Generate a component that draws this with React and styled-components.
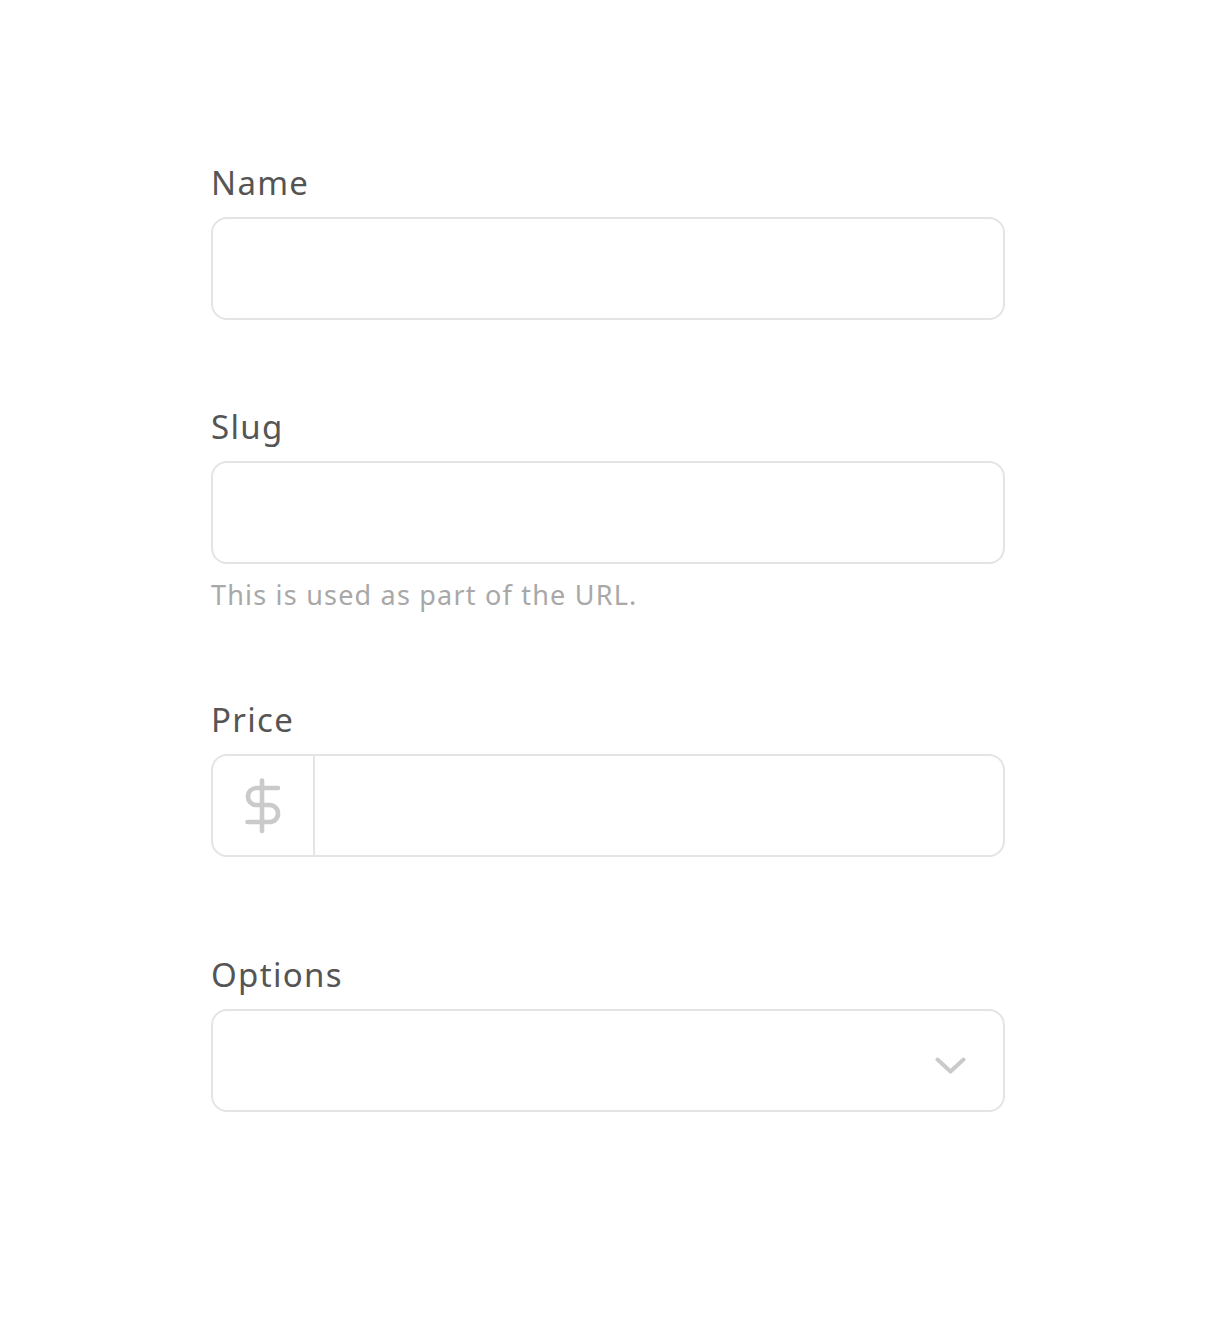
import React from 'react';
import styled, { createGlobalStyle } from 'styled-components';

const GlobalStyle = createGlobalStyle`
  html, body {
    margin: 0;
    padding: 0;
    background: #ffffff;
  }
  body {
    font-family: "Noto Sans", Lato, sans-serif;
    -webkit-font-smoothing: antialiased;
  }
`;

const Page = styled.div`
  width: 1232px;
  min-height: 1318px;
  box-sizing: border-box;
  padding: 160px 0 0 211px;
`;

const Form = styled.form`
  width: 794px;
  display: flex;
  flex-direction: column;
`;

const Field = styled.div`
  display: flex;
  flex-direction: column;
  margin-top: ${(p) => p.$gap || 0}px;
`;

const Label = styled.label`
  font-size: 33px;
  line-height: 40px;
  color: #555555;
  letter-spacing: 1.3px;
  padding-top: 3px;
  margin-bottom: 14px;
`;

const Box = styled.div`
  position: relative;
  display: flex;
  align-items: stretch;
  height: 103px;
  box-sizing: border-box;
  border: 2px solid #e4e4e4;
  border-radius: 16px;
  background: #ffffff;
  overflow: hidden;
`;

const Input = styled.input`
  flex: 1;
  min-width: 0;
  border: 0;
  outline: none;
  background: transparent;
  padding: 0 28px;
  font-family: inherit;
  font-size: 28px;
  color: #555555;
`;

const Prefix = styled.div`
  width: 100px;
  flex-shrink: 0;
  display: flex;
  align-items: center;
  justify-content: center;
  border-right: 2px solid #e4e4e4;
`;

const Select = styled.select`
  flex: 1;
  border: 0;
  outline: none;
  background: transparent;
  appearance: none;
  -webkit-appearance: none;
  padding: 0 28px;
  font-family: inherit;
  font-size: 28px;
  color: #555555;
`;

const Chevron = styled.svg`
  position: absolute;
  right: 37px;
  top: 46px;
  pointer-events: none;
`;

const Help = styled.p`
  margin: 15px 0 0;
  font-size: 27px;
  line-height: 32px;
  color: #a8a8a8;
  letter-spacing: 1.2px;
`;

const DollarIcon = () => (
  <svg width="40" height="56" viewBox="0 0 40 56" fill="none">
    <g stroke="#cacaca" strokeWidth="4.6" strokeLinecap="round" strokeLinejoin="round">
      <path d="M19 2.5V53" />
      <path d="M35 10H13.5a8.5 8.5 0 0 0 0 17H26.5a8.5 8.5 0 0 1 0 17H4.5" />
    </g>
  </svg>
);

const App = () => (
  <Page>
    <GlobalStyle />
    <Form>
      <Field>
        <Label>Name</Label>
        <Box>
          <Input type="text" />
        </Box>
      </Field>

      <Field $gap={84}>
        <Label>Slug</Label>
        <Box>
          <Input type="text" />
        </Box>
        <Help>This is used as part of the URL.</Help>
      </Field>

      <Field $gap={86}>
        <Label>Price</Label>
        <Box>
          <Prefix>
            <DollarIcon />
          </Prefix>
          <Input type="text" />
        </Box>
      </Field>

      <Field $gap={95}>
        <Label>Options</Label>
        <Box>
          <Select defaultValue="">
            <option value=""></option>
          </Select>
          <Chevron width="31" height="17" viewBox="0 0 31 17" fill="none">
            <path d="M2.5 2.5L15.5 14.5L28.5 2.5" stroke="#cacaca" strokeWidth="4" strokeLinecap="round" strokeLinejoin="round" />
          </Chevron>
        </Box>
      </Field>
    </Form>
  </Page>
);

export default App;
